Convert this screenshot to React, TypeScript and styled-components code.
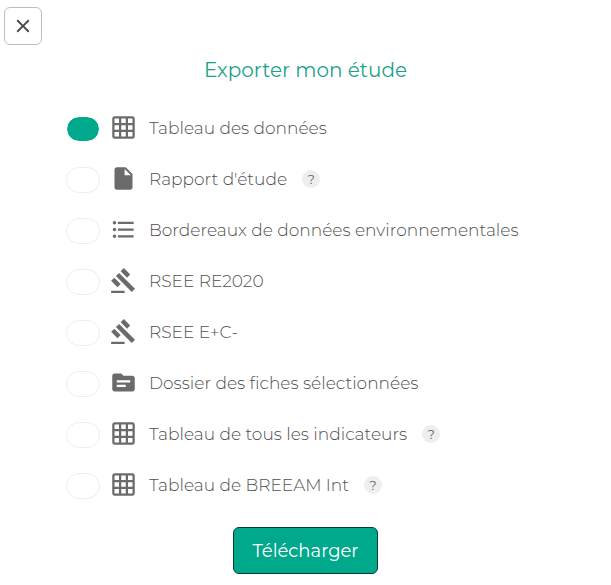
import React from "react";
import styled, { createGlobalStyle } from "styled-components";
import type { IconType } from "react-icons";
import {
  MdClose,
  MdFormatListBulleted,
  MdGavel,
  MdGridOn,
  MdInsertDriveFile,
  MdSource,
} from "react-icons/md";

const GlobalStyle = createGlobalStyle`
  *, *::before, *::after { box-sizing: border-box; }
  body {
    margin: 0;
    background: #ffffff;
    color: #505050;
    font-family: Montserrat, Inter, sans-serif;
    font-weight: 300;
  }
  button, input { font: inherit; }
`;

const Dialog = styled.main`
  display: flex;
  flex-direction: column;
  padding: 7px 4px 11px;
`;

const CloseButton = styled.button`
  display: flex;
  align-items: center;
  justify-content: center;
  width: 38px;
  height: 38px;
  padding: 0;
  border: 1px solid #bdbdbd;
  border-radius: 6px;
  background: #ffffff;
  color: #444444;
  cursor: pointer;
`;

const Title = styled.h1`
  margin: 12px 0 19px;
  color: #1aa18a;
  font-size: 20px;
  font-weight: 400;
  line-height: 26px;
  text-align: center;
`;

const OptionList = styled.ul`
  margin: 0;
  padding: 0 62px;
  list-style: none;
`;

const Option = styled.li`
  display: flex;
  align-items: center;
  height: 51px;
`;

const OptionLabel = styled.label`
  display: flex;
  align-items: center;
  font-size: 17px;
  line-height: 24px;
  white-space: nowrap;
  cursor: pointer;

  svg {
    flex: none;
    margin: 0 12px 0 10px;
    color: #6b6b6b;
  }
`;

const Toggle = styled.input`
  appearance: none;
  flex: none;
  width: 34px;
  height: 26px;
  margin: 3px 0 0;
  border: 1px solid #eeeeee;
  border-radius: 13px;
  background: #ffffff;
  cursor: pointer;

  &:checked {
    border-color: #ffffff;
    background: #00a88c;
    background-clip: padding-box;
  }
`;

const HelpButton = styled.button`
  width: 18px;
  height: 18px;
  margin-left: 15px;
  padding: 0;
  border: 0;
  border-radius: 50%;
  background: #eeeeee;
  color: #666666;
  font-size: 13px;
  font-weight: 400;
  line-height: 18px;
  cursor: help;
`;

const DownloadButton = styled.button`
  align-self: center;
  height: 47px;
  margin-top: 17px;
  padding: 0 18px;
  border: 1px solid #063c32;
  border-radius: 6px;
  background: #00a88c;
  color: #ffffff;
  font-size: 18px;
  font-weight: 400;
  line-height: 24px;
  cursor: pointer;
`;

interface ExportOption {
  id: string;
  label: string;
  icon: IconType;
  checked?: boolean;
  help?: boolean;
}

const options: ExportOption[] = [
  { id: "donnees", label: "Tableau des données", icon: MdGridOn, checked: true },
  { id: "rapport", label: "Rapport d'étude", icon: MdInsertDriveFile, help: true },
  { id: "bordereaux", label: "Bordereaux de données environnementales", icon: MdFormatListBulleted },
  { id: "re2020", label: "RSEE RE2020", icon: MdGavel },
  { id: "ec", label: "RSEE E+C-", icon: MdGavel },
  { id: "fiches", label: "Dossier des fiches sélectionnées", icon: MdSource },
  { id: "indicateurs", label: "Tableau de tous les indicateurs", icon: MdGridOn, help: true },
  { id: "breeam", label: "Tableau de BREEAM Int", icon: MdGridOn, help: true },
];

export default function App() {
  return (
    <>
      <GlobalStyle />
      <Dialog>
        <CloseButton type="button" aria-label="Fermer">
          <MdClose size={22} />
        </CloseButton>
        <Title>Exporter mon étude</Title>
        <OptionList>
          {options.map(({ id, label, icon: Icon, checked, help }) => (
            <Option key={id}>
              <OptionLabel htmlFor={id}>
                <Toggle type="checkbox" id={id} defaultChecked={checked} />
                <Icon size={27} aria-hidden />
                {label}
              </OptionLabel>
              {help && (
                <HelpButton type="button" aria-label={`Aide : ${label}`}>
                  ?
                </HelpButton>
              )}
            </Option>
          ))}
        </OptionList>
        <DownloadButton type="button">Télécharger</DownloadButton>
      </Dialog>
    </>
  );
}
